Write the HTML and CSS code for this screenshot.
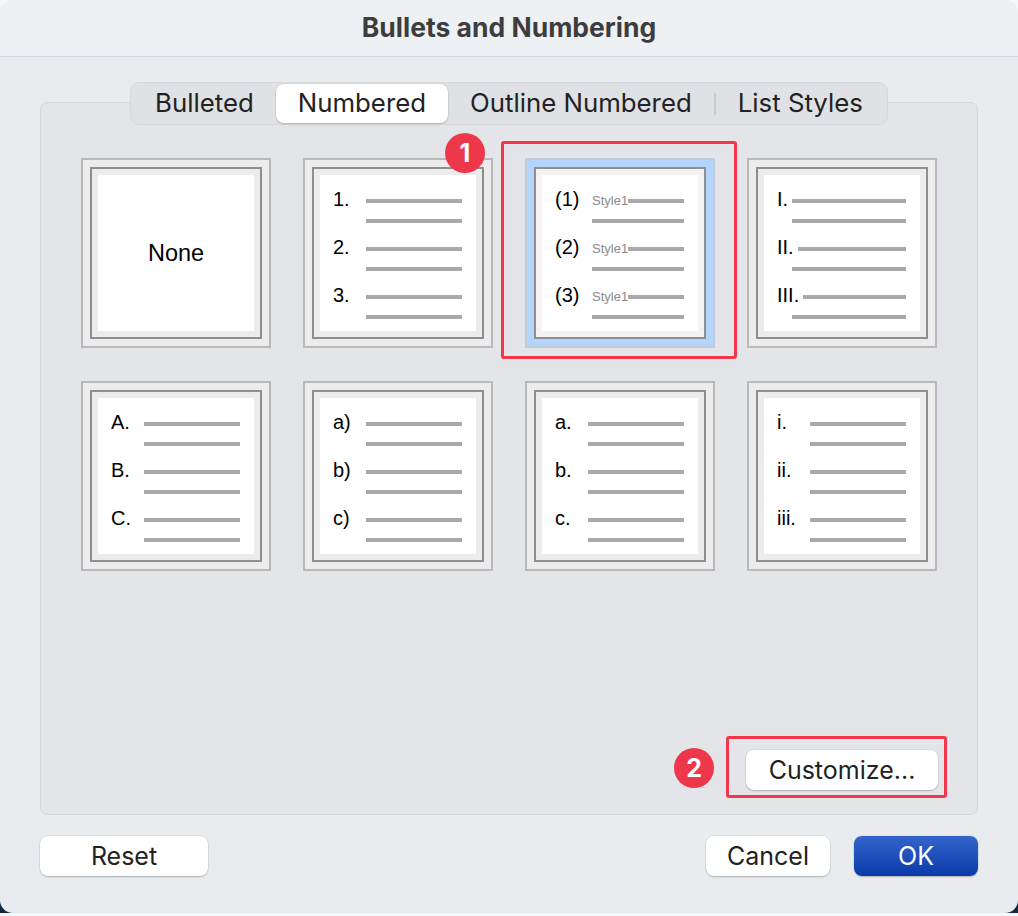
FILE: index.html
```html
<!DOCTYPE html>
<html lang="en">
<head>
    <meta charset="utf-8">
    <title>Bullets and Numbering</title>
    <link rel="stylesheet" href="styles.css">
</head>
<body>
<div class="window">
    <div class="titlebar">Bullets and Numbering</div>
    <div class="content">
        <div class="tabs">
            <div class="tab">Bulleted</div>
            <div class="tab active">Numbered</div>
            <div class="tab">Outline Numbered</div>
            <span class="divider"></span>
            <div class="tab">List Styles</div>
        </div>
        <div class="panel">
            <div class="grid">
                <div class="tile">
                    <div class="frame">
                        <div class="sheet none">None</div>
                    </div>
                </div>
                <div class="tile">
                    <div class="frame">
                        <div class="sheet">
                            <div class="item"><span class="num">1.</span><div class="bars"><i></i><i></i></div></div>
                            <div class="item"><span class="num">2.</span><div class="bars"><i></i><i></i></div></div>
                            <div class="item"><span class="num">3.</span><div class="bars"><i></i><i></i></div></div>
                        </div>
                    </div>
                </div>
                <div class="tile selected">
                    <div class="frame">
                        <div class="sheet">
                            <div class="item styled"><span class="num">(1)</span><div class="bars"><div class="first"><span class="tag">Style1</span><i></i></div><i class="under"></i></div></div>
                            <div class="item styled"><span class="num">(2)</span><div class="bars"><div class="first"><span class="tag">Style1</span><i></i></div><i class="under"></i></div></div>
                            <div class="item styled"><span class="num">(3)</span><div class="bars"><div class="first"><span class="tag">Style1</span><i></i></div><i class="under"></i></div></div>
                        </div>
                    </div>
                    <div class="mark tile-mark"></div>
                    <div class="badge tile-badge">1</div>
                </div>
                <div class="tile">
                    <div class="frame">
                        <div class="sheet">
                            <div class="item run"><div class="first"><span class="num">I.</span><i></i></div><i class="under"></i></div>
                            <div class="item run"><div class="first"><span class="num">II.</span><i></i></div><i class="under"></i></div>
                            <div class="item run"><div class="first"><span class="num">III.</span><i></i></div><i class="under"></i></div>
                        </div>
                    </div>
                </div>

                <div class="tile">
                    <div class="frame">
                        <div class="sheet">
                            <div class="item"><span class="num">A.</span><div class="bars"><i></i><i></i></div></div>
                            <div class="item"><span class="num">B.</span><div class="bars"><i></i><i></i></div></div>
                            <div class="item"><span class="num">C.</span><div class="bars"><i></i><i></i></div></div>
                        </div>
                    </div>
                </div>
                <div class="tile">
                    <div class="frame">
                        <div class="sheet">
                            <div class="item"><span class="num">a)</span><div class="bars"><i></i><i></i></div></div>
                            <div class="item"><span class="num">b)</span><div class="bars"><i></i><i></i></div></div>
                            <div class="item"><span class="num">c)</span><div class="bars"><i></i><i></i></div></div>
                        </div>
                    </div>
                </div>
                <div class="tile">
                    <div class="frame">
                        <div class="sheet">
                            <div class="item"><span class="num">a.</span><div class="bars"><i></i><i></i></div></div>
                            <div class="item"><span class="num">b.</span><div class="bars"><i></i><i></i></div></div>
                            <div class="item"><span class="num">c.</span><div class="bars"><i></i><i></i></div></div>
                        </div>
                    </div>
                </div>
                <div class="tile">
                    <div class="frame">
                        <div class="sheet">
                            <div class="item"><span class="num">i.</span><div class="bars"><i></i><i></i></div></div>
                            <div class="item"><span class="num">ii.</span><div class="bars"><i></i><i></i></div></div>
                            <div class="item"><span class="num">iii.</span><div class="bars"><i></i><i></i></div></div>
                        </div>
                    </div>
                </div>
            </div>
            <div class="panel-footer">
                <div class="custom-wrap">
                    <button class="btn customize">Customize...</button>
                    <div class="mark custom-mark"></div>
                    <div class="badge custom-badge">2</div>
                </div>
            </div>
        </div>
        <div class="footer">
            <button class="btn reset">Reset</button>
            <div class="actions">
                <button class="btn cancel">Cancel</button>
                <button class="btn primary">OK</button>
            </div>
        </div>
    </div>
</div>
</body>
</html>
```

FILE: styles.css
```css
body {
    margin: 0;
    background: linear-gradient(to bottom, #f6f7f9 0, #f6f7f9 50%, #0f2740 50%);
    font-family: Inter, "Liberation Sans", sans-serif;
}
.window {
    width: 1018px;
    height: 913px;
    background-color: #e9ecef;
    border-radius: 13px;
    overflow: hidden;
}
.titlebar {
    height: 56px;
    line-height: 54px;
    background-color: #eef1f4;
    border-bottom: 1px solid #d2d5d9;
    text-align: center;
    font-size: 26.5px;
    font-weight: bold;
    color: #3d3d3d;
}
.content {
    padding: 25px 40px 0 40px;
}
.tabs {
    position: relative;
    z-index: 1;
    display: flex;
    align-items: center;
    width: max-content;
    height: 43px;
    box-sizing: border-box;
    margin: 0 auto;
    padding: 2px;
    background-color: #dfe1e5;
    border: 1px solid #d6d8dc;
    border-radius: 9px;
}
.tab {
    height: 39px;
    line-height: 38px;
    padding: 0 22px;
    font-size: 25.8px;
    color: #222;
    border-radius: 8px;
}
.tab.active {
    background-color: #fff;
    box-shadow: 0 1px 2px rgba(0,0,0,0.18), 0 0 0 0.5px rgba(0,0,0,0.06);
}
.divider {
    width: 2px;
    height: 22px;
    background-color: #c9cbcf;
}
.panel {
    display: flex;
    flex-direction: column;
    height: 713px;
    box-sizing: border-box;
    margin-top: -23px;
    padding: 55px 39px 24px 40px;
    background-color: #e3e5e9;
    border: 1px solid #d5d7db;
    border-radius: 7px;
}
.grid {
    display: grid;
    grid-template-columns: repeat(4, 190px);
    column-gap: 32px;
    row-gap: 33px;
}
.tile {
    position: relative;
    width: 190px;
    height: 190px;
    box-sizing: border-box;
    padding: 7px;
    background-color: #ececec;
    border: 2px solid #b9b9b9;
}
.tile.selected {
    background-color: #b3d4fc;
    border-color: #c1ccd9;
}
.frame {
    padding: 6px;
    background-color: #ececec;
    border: 2px solid #8e8e8e;
}
.selected .frame {
    background-color: #f3f3f3;
}
.sheet {
    width: 156px;
    height: 156px;
    box-sizing: border-box;
    padding: 14px 14px 0 13px;
    background-color: #fff;
    overflow: hidden;
    font-family: "Liberation Sans", Arial, sans-serif;
    color: #000;
}
.sheet.none {
    display: flex;
    justify-content: center;
    align-items: center;
    padding: 0;
    font-size: 23.5px;
}
.item {
    display: flex;
    height: 48px;
}
.num {
    width: 33px;
    flex: none;
    font-size: 20px;
    line-height: 20px;
}
.bars {
    flex: 1;
}
.bars i, .first i, .under {
    display: block;
    height: 4px;
    background-color: #a9a9a9;
}
.bars i {
    margin-top: 10px;
}
.bars i + i {
    margin-top: 16px;
}
.styled .num {
    width: 37px;
}
.first {
    display: flex;
    align-items: flex-start;
}
.first i {
    flex: 1;
}
.bars .first i {
    margin-top: 10px;
}
.tag {
    margin-top: 5px;
    font-size: 13px;
    line-height: 14px;
    color: #8b8b8b;
}
.bars .under {
    margin-top: 11px;
}
.run {
    display: block;
}
.run .num {
    width: auto;
}
.run .first i {
    margin: 10px 0 0 4px;
}
.run .under {
    margin: 10px 0 0 15px;
}
.mark {
    position: absolute;
    box-sizing: border-box;
    border: 3px solid #f4364c;
    border-radius: 3px;
}
.badge {
    position: absolute;
    width: 40px;
    height: 40px;
    border-radius: 50%;
    background-color: #ef374b;
    color: #fff;
    text-align: center;
    font-size: 25px;
    font-weight: bold;
    line-height: 40px;
}
.tile-mark {
    left: -26px;
    top: -19px;
    width: 236px;
    height: 218px;
}
.tile-badge {
    left: -82px;
    top: -27px;
}
.panel-footer {
    display: flex;
    justify-content: flex-end;
    margin-top: auto;
}
.custom-wrap {
    position: relative;
}
.custom-mark {
    left: -20px;
    top: -14px;
    width: 221px;
    height: 62px;
}
.custom-badge {
    left: -72px;
    top: -2px;
}
.btn {
    display: block;
    height: 40px;
    padding: 0;
    background-color: #fff;
    border: none;
    border-radius: 8px;
    box-shadow: 0 1px 1.5px rgba(0,0,0,0.22), 0 0 0 0.5px rgba(0,0,0,0.08);
    font-family: Inter, "Liberation Sans", sans-serif;
    font-size: 25px;
    color: #222;
}
.customize {
    width: 192px;
}
.footer {
    display: flex;
    justify-content: space-between;
    margin-top: 21px;
}
.reset {
    width: 168px;
}
.actions {
    display: flex;
    gap: 24px;
}
.cancel {
    width: 124px;
}
.primary {
    width: 124px;
    background: linear-gradient(to bottom, #3465cb, #0a3aa9);
    color: #fff;
}
```
